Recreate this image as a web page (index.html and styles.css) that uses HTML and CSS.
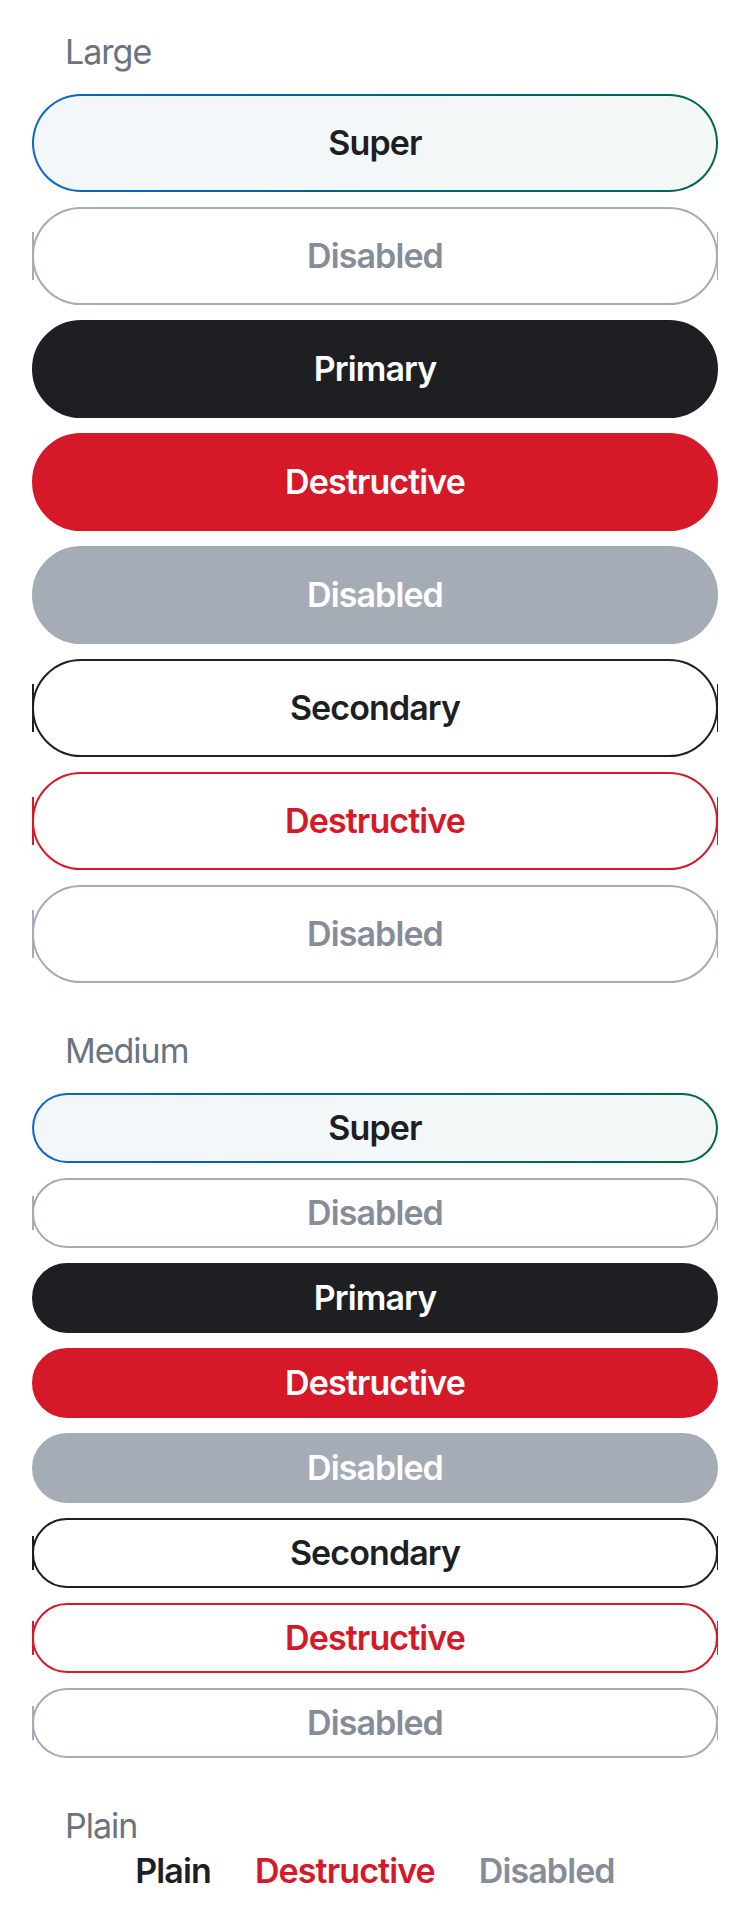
FILE: index.html
```html
<!DOCTYPE html>
<html lang="en">
<head>
<meta charset="utf-8">
<title>Buttons</title>
<link rel="stylesheet" href="styles.css">
</head>
<body>
<main class="page">
  <section class="group">
    <h2 class="group-label">Large</h2>
    <div class="stack stack-large">
      <button class="btn btn-lg btn-super">Super</button>
      <button class="btn btn-lg btn-outline btn-outline-disabled">Disabled</button>
      <button class="btn btn-lg btn-primary">Primary</button>
      <button class="btn btn-lg btn-destructive">Destructive</button>
      <button class="btn btn-lg btn-disabled">Disabled</button>
      <button class="btn btn-lg btn-outline btn-secondary">Secondary</button>
      <button class="btn btn-lg btn-outline btn-outline-destructive">Destructive</button>
      <button class="btn btn-lg btn-outline btn-outline-disabled">Disabled</button>
    </div>
  </section>
  <section class="group">
    <h2 class="group-label">Medium</h2>
    <div class="stack stack-medium">
      <button class="btn btn-md btn-super">Super</button>
      <button class="btn btn-md btn-outline btn-outline-disabled">Disabled</button>
      <button class="btn btn-md btn-primary">Primary</button>
      <button class="btn btn-md btn-destructive">Destructive</button>
      <button class="btn btn-md btn-disabled">Disabled</button>
      <button class="btn btn-md btn-outline btn-secondary">Secondary</button>
      <button class="btn btn-md btn-outline btn-outline-destructive">Destructive</button>
      <button class="btn btn-md btn-outline btn-outline-disabled">Disabled</button>
    </div>
  </section>
  <section class="group group-plain">
    <h2 class="group-label">Plain</h2>
    <div class="plain-row">
      <button class="plain plain-default">Plain</button>
      <button class="plain plain-destructive">Destructive</button>
      <button class="plain plain-disabled">Disabled</button>
    </div>
  </section>
</main>
</body>
</html>
```
FILE: styles.css
```css
* { box-sizing: border-box; }

html, body {
  margin: 0;
  padding: 0;
  background: #ffffff;
}

body {
  font-family: Inter, "Noto Sans", "Liberation Sans", sans-serif;
  -webkit-font-smoothing: antialiased;
}

.page {
  padding: 32px 32px 0 32px;
}

.group + .group {
  margin-top: 48px;
}

.group-label {
  margin: 0 0 22px 0;
  padding-left: 33px;
  font-size: 34px;
  line-height: 40px;
  font-weight: 400;
  color: #6b7280;
  letter-spacing: -1px;
}

.stack {
  display: flex;
  flex-direction: column;
  gap: 15px;
}

.btn {
  position: relative;
  display: flex;
  align-items: center;
  justify-content: center;
  width: 100%;
  margin: 0;
  padding: 0;
  border: 2px solid transparent;
  border-radius: 999px;
  font-family: inherit;
  font-size: 34px;
  font-weight: 600;
  line-height: 40px;
  letter-spacing: -0.9px;
  background: transparent;
  cursor: pointer;
}

.btn-lg { height: 98px; }
.btn-md { height: 70px; }

.btn-super {
  color: #1d1e22;
  background:
    linear-gradient(90deg, #f3f7fc, #f3f7f5) padding-box,
    linear-gradient(90deg, #0a66cc, #00627a 55%, #006650) border-box;
}

.btn-primary {
  color: #ffffff;
  background: #1e1f23;
  border-color: #1e1f23;
}

.btn-destructive {
  color: #ffffff;
  background: #d51928;
  border-color: #d51928;
}

.btn-disabled {
  color: #ffffff;
  background: #a6acb6;
  border-color: #a6acb6;
}

.btn-outline {
  background: #ffffff;
}

.btn-outline::before,
.btn-outline::after {
  content: "";
  position: absolute;
  top: 24%;
  bottom: 24%;
  width: 1.5px;
  background: var(--edge);
}

.btn-outline::before { left: -2px; }
.btn-outline::after { right: -2px; }

.btn-secondary {
  --edge: #1e1f23;
  color: #1e1f23;
  border-color: #1e1f23;
}

.btn-outline-destructive {
  --edge: #d51928;
  color: #d51928;
  border-color: #d51928;
}

.btn-outline-disabled {
  --edge: #a6acb6;
  color: #868c98;
  border-color: #a6acb6;
}

.group-plain .group-label {
  margin-bottom: 5px;
}

.plain-row {
  display: flex;
  justify-content: center;
  gap: 0;
}

.plain {
  margin: 0;
  padding: 0 22px;
  border: 0;
  background: transparent;
  font-family: inherit;
  font-size: 34px;
  font-weight: 600;
  line-height: 40px;
  letter-spacing: -0.9px;
  cursor: pointer;
}

.plain-default { color: #1e1f23; }
.plain-destructive { color: #d51928; }
.plain-disabled { color: #868c98; }
```
